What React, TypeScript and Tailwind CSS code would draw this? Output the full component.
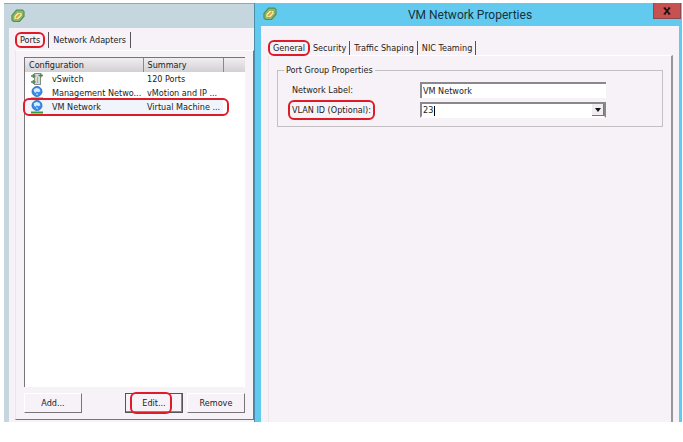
import type { ReactNode } from 'react';

const ports = [
  { icon: 'switch', name: 'vSwitch', summary: '120 Ports' },
  { icon: 'group', name: 'Management Netwo...', summary: 'vMotion and IP ...' },
  { icon: 'group', name: 'VM Network', summary: 'Virtual Machine ...', marked: true },
];

const propertyTabs = ['General', 'Security', 'Traffic Shaping', 'NIC Teaming'];

function AppIcon() {
  return (
    <svg viewBox="0 0 14 14" className="w-3.5 h-3.5" aria-hidden="true">
      <path d="M5.500 1.200h6l1.500 1.500v4.500L8.500 12.500h-6L1 11V6.500z" fill="#8dbb6c" stroke="#548f50" strokeWidth="1.200" />
      <path d="M6.500 3.400h3.700l.8.8v2.400l-3.500 3.800H3.800l-.8-.8V7.200z" fill="#f6edab" stroke="#729b48" strokeWidth=".6" />
      <path d="M5 8.900l4-4" stroke="#d9a23c" strokeWidth="2" />
    </svg>
  );
}

function SwitchIcon() {
  return (
    <svg viewBox="0 0 14 14" className="w-3.5 h-3.5" aria-hidden="true">
      <rect x="4.500" y="1.500" width="6" height="11" fill="#d5dad3" stroke="#858f84" />
      <path d="M1 4h4.500M8.500 3.500H13M1 10h4.500" stroke="#4c8a52" strokeWidth="1.400" />
      <path d="M3.300 2v4M11 1.500v4M3.300 8v4" stroke="#4c8a52" strokeWidth="1.200" />
      <path d="M7.500 5v6" stroke="#a4aea3" />
    </svg>
  );
}

function PortGroupIcon() {
  return (
    <svg viewBox="0 0 14 14" className="w-3.5 h-3.5" aria-hidden="true">
      <circle cx="7" cy="5.500" r="5" fill="#3b8be6" stroke="#2467bd" strokeWidth=".8" />
      <path d="M3.800 3.200l2.600-1.200 3 .8 1 2.400-1.800 1-2-.8-.8 1.400-1.600-.8z" fill="#d9eeff" />
      <path d="M5.800 7.400l2.200.4-.8 1.800z" fill="#d9eeff" />
      <path d="M1 12.500h12" stroke="#2ba336" strokeWidth="2" />
    </svg>
  );
}

// Red outline drawn around whatever the reader should look at
function Mark({ className }: { className: string }) {
  return (
    <span
      aria-hidden="true"
      className={`absolute border-2 border-[#e01b28] rounded-md pointer-events-none ${className}`}
    />
  );
}

function DialogButton({ children, isDefault = false }: { children: ReactNode; isDefault?: boolean }) {
  return (
    <button
      type="button"
      className={
        isDefault
          ? 'relative w-[58px] h-5 bg-[#f7f2f7] border border-[#55525a] shadow-[inset_-1px_-1px_0_#8b888d]'
          : 'relative w-[58px] h-5 bg-[#f7f2f7] border border-t-white border-l-white border-r-[#77747a] border-b-[#77747a]'
      }
    >
      {children}
    </button>
  );
}

function PortsWindow() {
  return (
    <section className="w-[250px] shrink-0 flex flex-col bg-[#c6d6de] border-t border-[#98a5aa] pl-[5px]">
      <header className="h-6 flex items-center pl-0.5">
        <AppIcon />
      </header>

      <div className="flex-1 flex flex-col bg-[#f7f2f7] pt-1 pl-1.5 pb-0.5">
        <nav className="h-[18px] flex items-start pl-px">
          <button type="button" className="relative h-4 px-1">
            Ports
            <Mark className="-inset-x-px inset-y-0" />
          </button>
          <button type="button" className="h-4 ml-1 px-1 border-x border-[#55525a]">
            Network Adapters
          </button>
        </nav>

        <div className="flex-1 flex flex-col border border-t-white border-l-[#ebe6eb] border-r-[#77747a] border-b-[#77747a] pt-1.5 pl-2 pr-2 pb-1.5">
          <div className="flex-1 bg-white border-t border-l border-[#77747a]">
            <table className="w-full table-fixed border-collapse text-left">
              <thead>
                <tr className="h-3.5 bg-linear-to-b from-[#f1eef1] to-[#d3d0d3]">
                  <th className="w-[118px] pl-1 font-normal border-r border-[#8b888d]">Configuration</th>
                  <th className="w-20 pl-1 font-normal border-r border-[#8b888d]">Summary</th>
                  <th aria-label="Spacer" />
                </tr>
              </thead>
              <tbody>
                {ports.map((port) => (
                  <tr key={port.name} className={port.marked ? 'relative h-3.5 bg-[#f0f4fb]' : 'h-3.5'}>
                    <td>
                      <div className="flex items-center gap-2 pl-[5px] whitespace-nowrap">
                        {port.icon === 'switch' ? <SwitchIcon /> : <PortGroupIcon />}
                        {port.name}
                      </div>
                    </td>
                    <td className="pl-1 whitespace-nowrap">
                      {port.summary}
                      {port.marked && <Mark className="-inset-y-0.5 -left-0.5 right-4" />}
                    </td>
                    <td className="bg-white" />
                  </tr>
                ))}
              </tbody>
            </table>
          </div>

          <div className="flex gap-1 pt-1.5">
            <DialogButton>Add...</DialogButton>
            <span className="flex-1" />
            <DialogButton isDefault>
              Edit...
              <Mark className="-inset-y-0.5 left-1 right-2.5" />
            </DialogButton>
            <DialogButton>Remove</DialogButton>
          </div>
        </div>
      </div>
    </section>
  );
}

function PropertiesWindow() {
  return (
    <section className="flex-1 flex flex-col bg-[#62caef] border-l border-[#4a8eaa] pl-1.5 pr-[3px]">
      <header className="relative h-[23px] flex items-center justify-center">
        <span className="absolute left-0.5 top-1">
          <AppIcon />
        </span>
        <h1 className="font-['Roboto',sans-serif] text-[12px] text-[#17323d]">VM Network Properties</h1>
        <button
          type="button"
          aria-label="Close"
          className="absolute -right-0.5 top-0 w-7 h-4 flex items-center justify-center bg-[#c75050] border border-t-0 border-[#8c4a50]"
        >
          <svg viewBox="0 0 8 8" className="w-2 h-2" aria-hidden="true">
            <path d="M1.500 1l5 6M6.500 1l-5 6" stroke="#1c1012" strokeWidth="1.900" />
            <path d="M.5 1h2.500M5 1h2.500M.5 7h2.500M5 7h2.500" stroke="#1c1012" />
          </svg>
        </button>
      </header>

      <div className="flex-1 flex flex-col bg-[#f7f2f7] pt-3.5 pl-[7px] pr-1.5">
        <nav className="h-[15px] flex items-center pl-px">
          {propertyTabs.map((tab, index) =>
            index === 0 ? (
              <button key={tab} type="button" className="relative h-4 px-1">
                {tab}
                <Mark className="-inset-x-px inset-y-0" />
              </button>
            ) : (
              <button key={tab} type="button" className="h-3.5 pl-1 pr-[3px] border-r border-[#55525a]">
                {tab}
              </button>
            ),
          )}
        </nav>

        <div className="flex-1 border-t border-l border-t-white border-l-[#ebe6eb] border-r-2 border-r-[#99969a] pt-2 pl-2 pr-2">
          <fieldset className="border border-[#c3bfc3] pl-3.5 pr-14 pb-2">
            <legend className="-ml-2 px-0.5">Port Group Properties</legend>
            <div className="grid grid-cols-[128px_1fr] gap-y-1 items-center pt-1.5">
              <label htmlFor="network-label">Network Label:</label>
              <input
                id="network-label"
                defaultValue="VM Network"
                className="w-full h-4 pl-px bg-white border-t-2 border-l-2 border-[#8b888d]"
              />
              <label htmlFor="vlan-id" className="relative justify-self-start">
                VLAN ID (Optional):
                <Mark className="-inset-x-1 -inset-y-1" />
              </label>
              <div className="relative h-4 flex bg-white border-2 border-[#8b888d] border-b-white">
                <input id="vlan-id" role="combobox" aria-expanded="false" defaultValue="23" className="flex-1 min-w-0 pl-px" />
                <span aria-hidden="true" className="absolute left-3 top-0.5 w-px h-2.5 bg-black" />
                <button
                  type="button"
                  aria-label="Show VLAN IDs"
                  className="w-3 flex items-center justify-center bg-[#f1edf1] border-r border-b border-[#77747a]"
                >
                  <svg viewBox="0 0 6 4" className="w-1.5 h-1" aria-hidden="true">
                    <path d="M0 0h6L3 4z" fill="#111" />
                  </svg>
                </button>
              </div>
            </div>
          </fieldset>
        </div>
      </div>
    </section>
  );
}

export default function App() {
  return (
    <main className="h-screen flex pt-[3px] pb-5 pl-1 pr-px bg-white font-['DejaVu_Sans_Condensed','DejaVu_Sans',sans-serif] text-[9px] leading-3 text-[#222]">
      <PortsWindow />
      <PropertiesWindow />
    </main>
  );
}
